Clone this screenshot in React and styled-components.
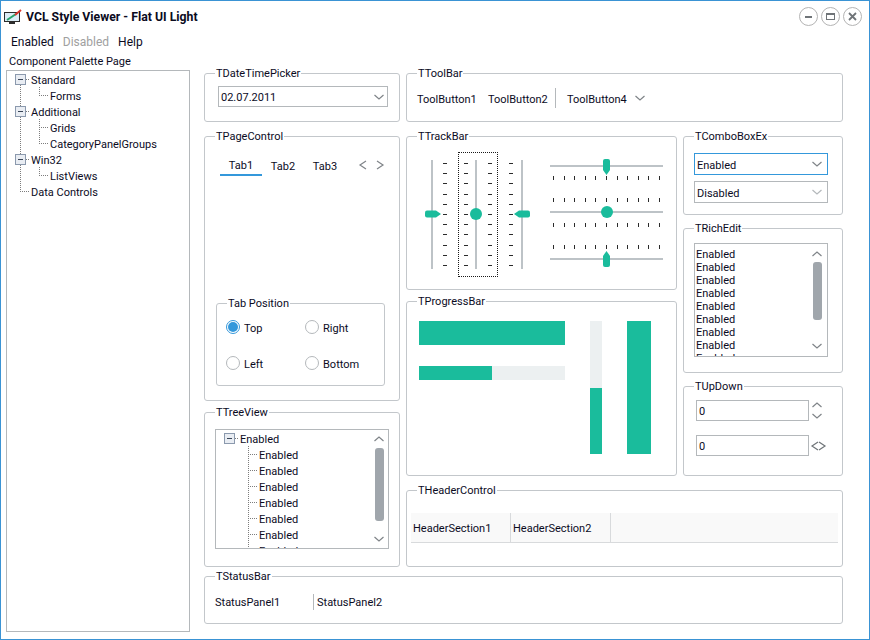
import React from "react";
import styled, { createGlobalStyle } from "styled-components";

const TEAL = "#1abc9c";
const TICK = "#2b2b2b";
const RAIL = "#bdc3c7";

const GlobalStyle = createGlobalStyle`
  html, body {
    margin: 0;
    padding: 0;
    background: #ffffff;
  }
  body {
    font-family: Roboto, "Open Sans", sans-serif;
    font-size: 11px;
    color: #0b0b1e;
  }
`;

const Window = styled.div`
  box-sizing: border-box;
  width: 870px;
  height: 640px;
  border: 1px solid #3a93d4;
  background: #ffffff;
  overflow: hidden;
  display: flex;
  flex-direction: column;
`;

const Drawing = styled.svg`
  display: block;
  flex: none;
`;

// text in a centred row: the extra top padding sets it one pixel lower, like the original font
const Label = styled.span`
  display: block;
  padding-top: 2px;
`;

const TitleBar = styled.div`
  display: flex;
  align-items: center;
  height: 31px;
  padding: 0 7px 0 3px;
  flex: none;
`;

const Title = styled.div`
  margin-left: 4px;
  font-weight: 700;
  font-size: 12.25px;
  flex: 1;
`;

const CaptionButton = styled.div`
  box-sizing: border-box;
  width: 19px;
  height: 19px;
  margin-left: 3px;
  border: 1px solid #b4b4b4;
  border-radius: 50%;
  display: flex;
  align-items: center;
  justify-content: center;
`;

const MenuBar = styled.div`
  box-sizing: border-box;
  display: flex;
  height: 18px;
  align-items: center;
  padding: 2px 0 0 10px;
  gap: 9px;
  font-size: 12px;
  flex: none;
`;

const MenuItem = styled.span`
  color: ${({ $disabled }) => ($disabled ? "#a0a0a0" : "#0b0b1e")};
`;

const Body = styled.div`
  flex: 1;
  display: flex;
  min-height: 0;
`;

const LeftPanel = styled.div`
  width: 189px;
  margin-left: 5px;
  display: flex;
  flex-direction: column;
  flex: none;
`;

const PanelLabel = styled.div`
  height: 20px;
  line-height: 23px;
  padding-left: 3px;
  flex: none;
`;

const PanelTree = styled.div`
  box-sizing: border-box;
  width: 184px;
  height: 562px;
  border: 1px solid #b4b8bb;
`;

const Content = styled.div`
  margin-left: 9px;
  margin-top: 23px;
  width: 639px;
  display: flex;
  flex-direction: column;
`;

const Columns = styled.div`
  display: flex;
  gap: 6px;
`;

const Stack = styled.div`
  display: flex;
  flex-direction: column;
  width: ${({ $w }) => $w}px;
  flex: none;
`;

const Group = styled.div`
  box-sizing: border-box;
  height: ${({ $h }) => $h}px;
  margin-top: ${({ $mt }) => $mt || 0}px;
  border: 1px solid #c3c7cb;
  border-radius: 3px;
  display: flex;
  flex-direction: column;
  flex: none;
`;

const Legend = styled.div`
  align-self: flex-start;
  margin: -8px 0 0 10px;
  padding: 0 1px;
  height: 14px;
  line-height: 16px;
  background: #ffffff;
  flex: none;
`;

const Field = styled.div`
  box-sizing: border-box;
  display: flex;
  align-items: center;
  justify-content: space-between;
  flex: none;
  width: ${({ $w }) => $w}px;
  height: ${({ $h }) => $h}px;
  margin: ${({ $m }) => $m};
  padding: 0 ${({ $pr }) => $pr || 5}px 0 2px;
  border: 1px solid ${({ $focus }) => ($focus ? "#3498db" : "#b4b8bb")};
`;

const ToolRow = styled.div`
  display: flex;
  align-items: center;
  padding: 8px 0 0 10px;
`;

const ToolButton = styled.span`
  width: ${({ $w }) => $w}px;
  padding-top: 2px;
  flex: none;
`;

const ToolSeparator = styled.span`
  width: 1px;
  height: 20px;
  background: #b4b8bb;
  margin-right: 11px;
  flex: none;
`;

const TabRow = styled.div`
  display: flex;
  align-items: flex-start;
  height: 19px;
  margin: 14px 0 0 15px;
`;

const Tab = styled.div`
  box-sizing: border-box;
  width: 42px;
  height: 19px;
  text-align: center;
  line-height: ${({ $active }) => ($active ? 17 : 19)}px;
  border-bottom: ${({ $active }) => ($active ? "2px solid #3498db" : "none")};
`;

const TabArrows = styled.div`
  display: flex;
  gap: 7px;
  margin: 3px 0 0 12px;
`;

const RadioGroup = styled(Group)`
  margin-left: 11px;
  margin-right: 14px;
`;

const RadioGrid = styled.div`
  display: grid;
  grid-template-columns: 79px 1fr;
  grid-auto-rows: 36px;
  padding: 9px 0 0 9px;
`;

const Radio = styled.label`
  display: flex;
  align-items: center;
  height: 16px;
  gap: 4px;
`;

const RadioDot = styled.span`
  box-sizing: border-box;
  width: 14px;
  height: 14px;
  border-radius: 50%;
  border: 1px solid ${({ $on }) => ($on ? "#3498db" : "#b4b8bb")};
  display: flex;
  align-items: center;
  justify-content: center;
  &::after {
    content: "";
    display: ${({ $on }) => ($on ? "block" : "none")};
    width: 10px;
    height: 10px;
    border-radius: 50%;
    background: #3498db;
  }
`;

const ListBox = styled.div`
  box-sizing: border-box;
  width: ${({ $w }) => $w}px;
  height: ${({ $h }) => $h}px;
  margin: ${({ $m }) => $m};
  border: 1px solid #b4b8bb;
  display: flex;
  overflow: hidden;
  flex: none;
`;

const ListLines = styled.div`
  flex: 1;
  min-width: 0;
  padding: ${({ $pad }) => $pad};
`;

const Line = styled.div`
  height: ${({ $h }) => $h}px;
  line-height: ${({ $h }) => $h}px;
  white-space: nowrap;
`;

const Scroller = styled.div`
  width: 10px;
  margin-right: ${({ $mr }) => $mr}px;
  padding-top: ${({ $pt }) => $pt}px;
  display: flex;
  flex-direction: column;
  align-items: center;
  flex: none;
`;

const ScrollThumb = styled.div`
  width: 9px;
  height: ${({ $h }) => $h}px;
  margin: ${({ $m }) => $m};
  background: #a0a6ac;
  border-radius: 3px;
  flex: none;
`;

const TreeRow = styled.div`
  display: flex;
  align-items: center;
  height: 16px;
  white-space: nowrap;
`;

const TrackArea = styled.div`
  display: flex;
  align-items: flex-start;
  margin: 9px 0 0 13px;
`;

const Focus = styled.div`
  box-sizing: border-box;
  width: 40px;
  height: 125px;
  border: 1px dotted #1a1a1a;
  margin: 0 10px;
  display: flex;
  justify-content: center;
  align-items: center;
  flex: none;
`;

const SliderColumn = styled.div`
  display: flex;
  flex-direction: column;
  margin: 5px 0 0 17px;
  gap: 15px;
`;

const ProgressArea = styled.div`
  display: flex;
  margin: 13px 0 0 12px;
`;

const ProgressColumn = styled.div`
  display: flex;
  flex-direction: column;
  gap: 21px;
`;

const HBar = styled.div`
  width: 146px;
  height: ${({ $h }) => $h}px;
  background: #ecf0f1;
  flex: none;
`;

const VBar = styled.div`
  width: ${({ $w }) => $w}px;
  height: 133px;
  margin-left: ${({ $ml }) => $ml}px;
  background: #ecf0f1;
  display: flex;
  align-items: flex-end;
  flex: none;
`;

const Fill = styled.div`
  background: ${TEAL};
  width: ${({ $w }) => $w}%;
  height: ${({ $p }) => $p}%;
`;

const UpDownRow = styled.div`
  display: flex;
  align-items: center;
  margin: ${({ $m }) => $m};
`;

const SpinColumn = styled.div`
  display: flex;
  flex-direction: column;
  gap: 1px;
  margin-left: 3px;
`;

const SpinRow = styled.div`
  display: flex;
  margin-left: 1px;
  & > svg + svg {
    margin-left: -3px;
  }
`;

const HeaderBar = styled.div`
  display: flex;
  height: 30px;
  margin: 16px 4px 0 4px;
  background: #f9f9f9;
  border-bottom: 1px solid #d8dadc;
  box-sizing: border-box;
`;

const HeaderSection = styled.div`
  box-sizing: border-box;
  width: 100px;
  padding-left: 2px;
  line-height: 31px;
  border-right: 1px solid #d8dadc;
`;

const StatusRow = styled.div`
  display: flex;
  align-items: center;
  margin: 9px 0 0 10px;
  height: 20px;
`;

const StatusPanel = styled.div`
  width: ${({ $w }) => $w}px;
  height: 16px;
  line-height: 18px;
  padding-left: ${({ $pad }) => $pad || 0}px;
  border-left: ${({ $sep }) => ($sep ? "1px solid #b4b8bb" : "none")};
`;

function Chevron({ dir = "down", color = "#7f8488" }) {
  const d = {
    down: "M0.5 3 L5 7 L9.5 3",
    up: "M0.5 7 L5 3 L9.5 7",
    left: "M8 1 L2 5 L8 9",
    right: "M2 1 L8 5 L2 9",
  }[dir];
  return (
    <Drawing width="10" height="10" viewBox="0 0 10 10">
      <path d={d} fill="none" stroke={color} strokeWidth="1.2" />
    </Drawing>
  );
}

function AppIcon() {
  return (
    <Drawing width="18" height="16" viewBox="0 0 18 16">
      <rect x="0.5" y="3.5" width="15" height="9" fill="#f4f8fb" stroke="#2c2c2c" />
      <rect x="1" y="4" width="14" height="8" fill="#dcecf6" />
      <path d="M3 11 L12 5" stroke="#26a269" strokeWidth="2" />
      <path d="M11 6 L17 1" stroke="#d9342b" strokeWidth="2" />
      <rect x="5" y="13" width="6" height="2" fill="#2c2c2c" />
    </Drawing>
  );
}

// one row of a tree: dotted guides and the optional expander are drawn, the label stays text
function TreeGlyph({ width, rootX, childX, expander, verts = [], stem, end }) {
  const dots = { stroke: "#7d7d7d", strokeDasharray: "1 1", strokeWidth: 1 };
  return (
    <Drawing width={width} height="16">
      {verts.map((x) => (
        <line key={x} x1={x + 0.5} x2={x + 0.5} y1="0" y2="16" {...dots} />
      ))}
      {stem && <line x1={rootX + 0.5} x2={rootX + 0.5} y1="8" y2="16" {...dots} />}
      {childX != null && <line x1={childX + 0.5} x2={childX + 0.5} y1="0" y2="8" {...dots} />}
      {childX != null && <line x1={childX} x2={width - 1} y1="8.5" y2="8.5" {...dots} />}
      {end && <line x1={rootX + 0.5} x2={rootX + 0.5} y1="0" y2="8" {...dots} />}
      {end && <line x1={rootX} x2={width - 1} y1="8.5" y2="8.5" {...dots} />}
      {expander && (
        <g>
          <line x1={rootX + 6} x2={width - 1} y1="8.5" y2="8.5" {...dots} />
          <rect x={rootX - 4.5} y="3.5" width="10" height="10" fill="#e9edf3" stroke="#8b99ad" />
          <line x1={rootX - 2} x2={rootX + 3} y1="8.5" y2="8.5" stroke="#3a4658" />
        </g>
      )}
    </Drawing>
  );
}

const paletteRows = [
  { text: "Standard", top: true },
  { text: "Forms", verts: [13] },
  { text: "Additional", top: true, verts: [13] },
  { text: "Grids", verts: [13, 32] },
  { text: "CategoryPanelGroups", verts: [13] },
  { text: "Win32", top: true, verts: [13] },
  { text: "ListViews", verts: [13] },
  { text: "Data Controls", end: true },
];

// the teardrop thumb of a trackbar, tip pointing down before it is turned
function Teardrop({ cx, cy, angle }) {
  return (
    <path
      transform={`translate(${cx} ${cy}) rotate(${angle})`}
      d="M-3.5 -6 Q-3.5 -8 -1.5 -8 H1.5 Q3.5 -8 3.5 -6 V3 L0 8 L-3.5 3 Z"
      fill={TEAL}
    />
  );
}

function VerticalSlider({ width, railX, ticks, thumb }) {
  const ys = Array.from({ length: 11 }, (_, i) => 11 + i * 10.2);
  return (
    <Drawing width={width} height="125">
      <rect x={railX} y="8" width="2" height="109" fill={RAIL} />
      {ticks.map((x) =>
        ys.map((y) => <rect key={`${x}-${y}`} x={x} y={Math.round(y)} width="4" height="1" fill={TICK} />)
      )}
      {thumb === "circle" && <circle cx={railX + 1} cy="62" r="6" fill={TEAL} />}
      {thumb === "right" && <Teardrop cx={railX + 2} cy={62} angle={-90} />}
      {thumb === "left" && <Teardrop cx={railX + 1} cy={62} angle={90} />}
    </Drawing>
  );
}

function HorizontalSlider({ height, railY, ticks, thumb }) {
  const xs = Array.from({ length: 11 }, (_, i) => 3 + i * 10.6);
  return (
    <Drawing width="113" height={height}>
      <rect x="0" y={railY} width="113" height="2" fill={RAIL} />
      {ticks.map((y) =>
        xs.map((x) => <rect key={`${x}-${y}`} x={Math.round(x)} y={y} width="1" height="4" fill={TICK} />)
      )}
      {thumb === "circle" && <circle cx="57" cy={railY + 1} r="6" fill={TEAL} />}
      {thumb === "down" && <Teardrop cx={56.5} cy={railY + 2} angle={0} />}
      {thumb === "up" && <Teardrop cx={56.5} cy={railY + 1} angle={180} />}
    </Drawing>
  );
}

export default function App() {
  return (
    <>
      <GlobalStyle />
      <Window>
        <TitleBar>
          <AppIcon />
          <Title>VCL Style Viewer - Flat UI Light</Title>
          <CaptionButton>
            <Drawing width="9" height="9"><rect x="1" y="4" width="7" height="2" fill="#6f7478" /></Drawing>
          </CaptionButton>
          <CaptionButton>
            <Drawing width="11" height="9"><rect x="1.5" y="1.5" width="8" height="6" fill="none" stroke="#6f7478" /><rect x="1" y="1" width="9" height="2" fill="#6f7478" /></Drawing>
          </CaptionButton>
          <CaptionButton>
            <Drawing width="9" height="9"><path d="M1 1 L8 8 M8 1 L1 8" stroke="#6f7478" strokeWidth="1.8" /></Drawing>
          </CaptionButton>
        </TitleBar>
        <MenuBar>
          <MenuItem>Enabled</MenuItem>
          <MenuItem $disabled>Disabled</MenuItem>
          <MenuItem>Help</MenuItem>
        </MenuBar>
        <Body>
          <LeftPanel>
            <PanelLabel>Component Palette Page</PanelLabel>
            <PanelTree>
              {paletteRows.map((r) => (
                <TreeRow key={r.text}>
                  {r.top ? (
                    <TreeGlyph width={24} rootX={13} expander stem verts={r.verts} />
                  ) : r.end ? (
                    <TreeGlyph width={24} rootX={13} end />
                  ) : (
                    <TreeGlyph width={43} childX={32} verts={r.verts} />
                  )}
                  <Label>{r.text}</Label>
                </TreeRow>
              ))}
            </PanelTree>
          </LeftPanel>
          <Content>
            <Columns>
              <Stack $w={196}>
                <Group $h={49}>
                  <Legend>TDateTimePicker</Legend>
                  <Field $w={170} $h={21} $m="6px 0 0 13px" $pr={3}>
                    <Label>02.07.2011</Label>
                    <Chevron />
                  </Field>
                </Group>
                <Group $h={265} $mt={14}>
                  <Legend>TPageControl</Legend>
                  <TabRow>
                    <Tab $active>Tab1</Tab>
                    <Tab>Tab2</Tab>
                    <Tab>Tab3</Tab>
                    <TabArrows>
                      <Chevron dir="left" />
                      <Chevron dir="right" />
                    </TabArrows>
                  </TabRow>
                  <RadioGroup $h={83} $mt={127}>
                    <Legend>Tab Position</Legend>
                    <RadioGrid>
                      <Radio><RadioDot $on /><Label>Top</Label></Radio>
                      <Radio><RadioDot /><Label>Right</Label></Radio>
                      <Radio><RadioDot /><Label>Left</Label></Radio>
                      <Radio><RadioDot /><Label>Bottom</Label></Radio>
                    </RadioGrid>
                  </RadioGroup>
                </Group>
                <Group $h={155} $mt={11}>
                  <Legend>TTreeView</Legend>
                  <ListBox $w={174} $h={120} $m="10px 0 0 10px">
                    <ListLines $pad="0">
                      <TreeRow>
                        <TreeGlyph width={24} rootX={13} expander />
                        <Label>Enabled</Label>
                      </TreeRow>
                      {[0, 1, 2, 3, 4, 5, 6].map((i) => (
                        <TreeRow key={i}>
                          <TreeGlyph width={43} childX={32} verts={[32]} />
                          <Label>Enabled</Label>
                        </TreeRow>
                      ))}
                    </ListLines>
                    <Scroller $mr={4} $pt={4}>
                      <Chevron dir="up" />
                      <ScrollThumb $h={73} $m="4px 0 13px" />
                      <Chevron />
                    </Scroller>
                  </ListBox>
                </Group>
              </Stack>
              <Stack $w={437}>
                <Group $h={49}>
                  <Legend>TToolBar</Legend>
                  <ToolRow>
                    <ToolButton $w={71}>ToolButton1</ToolButton>
                    <ToolButton $w={67}>ToolButton2</ToolButton>
                    <ToolSeparator />
                    <ToolButton $w={68}>ToolButton4</ToolButton>
                    <Chevron />
                  </ToolRow>
                </Group>
                <Columns>
                  <Stack $w={271}>
                    <Group $h={154} $mt={14}>
                      <Legend>TTrackBar</Legend>
                      <TrackArea>
                        <VerticalSlider width={28} railX={11} ticks={[23]} thumb="right" />
                        <Focus>
                          <VerticalSlider width={28} railX={11} ticks={[0, 24]} thumb="circle" />
                        </Focus>
                        <VerticalSlider width={25} railX={13} ticks={[1]} thumb="left" />
                        <SliderColumn>
                          <HorizontalSlider height={24} railY={8} ticks={[19]} thumb="down" />
                          <HorizontalSlider height={32} railY={15} ticks={[2, 27]} thumb="circle" />
                          <HorizontalSlider height={24} railY={15} ticks={[2]} thumb="up" />
                        </SliderColumn>
                      </TrackArea>
                    </Group>
                    <Group $h={175} $mt={11}>
                      <Legend>TProgressBar</Legend>
                      <ProgressArea>
                        <ProgressColumn>
                          <HBar $h={24}><Fill $w={100} $p={100} /></HBar>
                          <HBar $h={14}><Fill $w={50} $p={100} /></HBar>
                        </ProgressColumn>
                        <VBar $w={12} $ml={25}><Fill $w={100} $p={50} /></VBar>
                        <VBar $w={24} $ml={25}><Fill $w={100} $p={100} /></VBar>
                      </ProgressArea>
                    </Group>
                  </Stack>
                  <Stack $w={160}>
                    <Group $h={79} $mt={14}>
                      <Legend>TComboBoxEx</Legend>
                      <Field $focus $w={134} $h={22} $m="10px 0 0 10px">
                        <Label>Enabled</Label>
                        <Chevron />
                      </Field>
                      <Field $w={134} $h={22} $m="6px 0 0 10px">
                        <Label>Disabled</Label>
                        <Chevron color="#b4b8bb" />
                      </Field>
                    </Group>
                    <Group $h={145} $mt={13}>
                      <Legend>TRichEdit</Legend>
                      <ListBox $w={134} $h={114} $m="8px 0 0 10px">
                        <ListLines $pad="4px 0 0 1px">
                          {[0, 1, 2, 3, 4, 5, 6, 7, 8].map((i) => (
                            <Line key={i} $h={13}>Enabled</Line>
                          ))}
                        </ListLines>
                        <Scroller $mr={5} $pt={5}>
                          <Chevron dir="up" />
                          <ScrollThumb $h={58} $m="3px 0 21px" />
                          <Chevron />
                        </Scroller>
                      </ListBox>
                    </Group>
                    <Group $h={90} $mt={13}>
                      <Legend>TUpDown</Legend>
                      <UpDownRow $m="7px 0 0 12px">
                        <Field $w={113} $h={21}><Label>0</Label></Field>
                        <SpinColumn>
                          <Chevron dir="up" />
                          <Chevron />
                        </SpinColumn>
                      </UpDownRow>
                      <UpDownRow $m="14px 0 0 12px">
                        <Field $w={113} $h={21}><Label>0</Label></Field>
                        <SpinRow>
                          <Chevron dir="left" color="#6f7478" />
                          <Chevron dir="right" color="#6f7478" />
                        </SpinRow>
                      </UpDownRow>
                    </Group>
                  </Stack>
                </Columns>
                <Group $h={77} $mt={14}>
                  <Legend>THeaderControl</Legend>
                  <HeaderBar>
                    <HeaderSection>HeaderSection1</HeaderSection>
                    <HeaderSection>HeaderSection2</HeaderSection>
                  </HeaderBar>
                </Group>
              </Stack>
            </Columns>
            <Group $h={48} $mt={9}>
              <Legend>TStatusBar</Legend>
              <StatusRow>
                <StatusPanel $w={98}>StatusPanel1</StatusPanel>
                <StatusPanel $w={100} $pad={3} $sep>StatusPanel2</StatusPanel>
              </StatusRow>
            </Group>
          </Content>
        </Body>
      </Window>
    </>
  );
}
